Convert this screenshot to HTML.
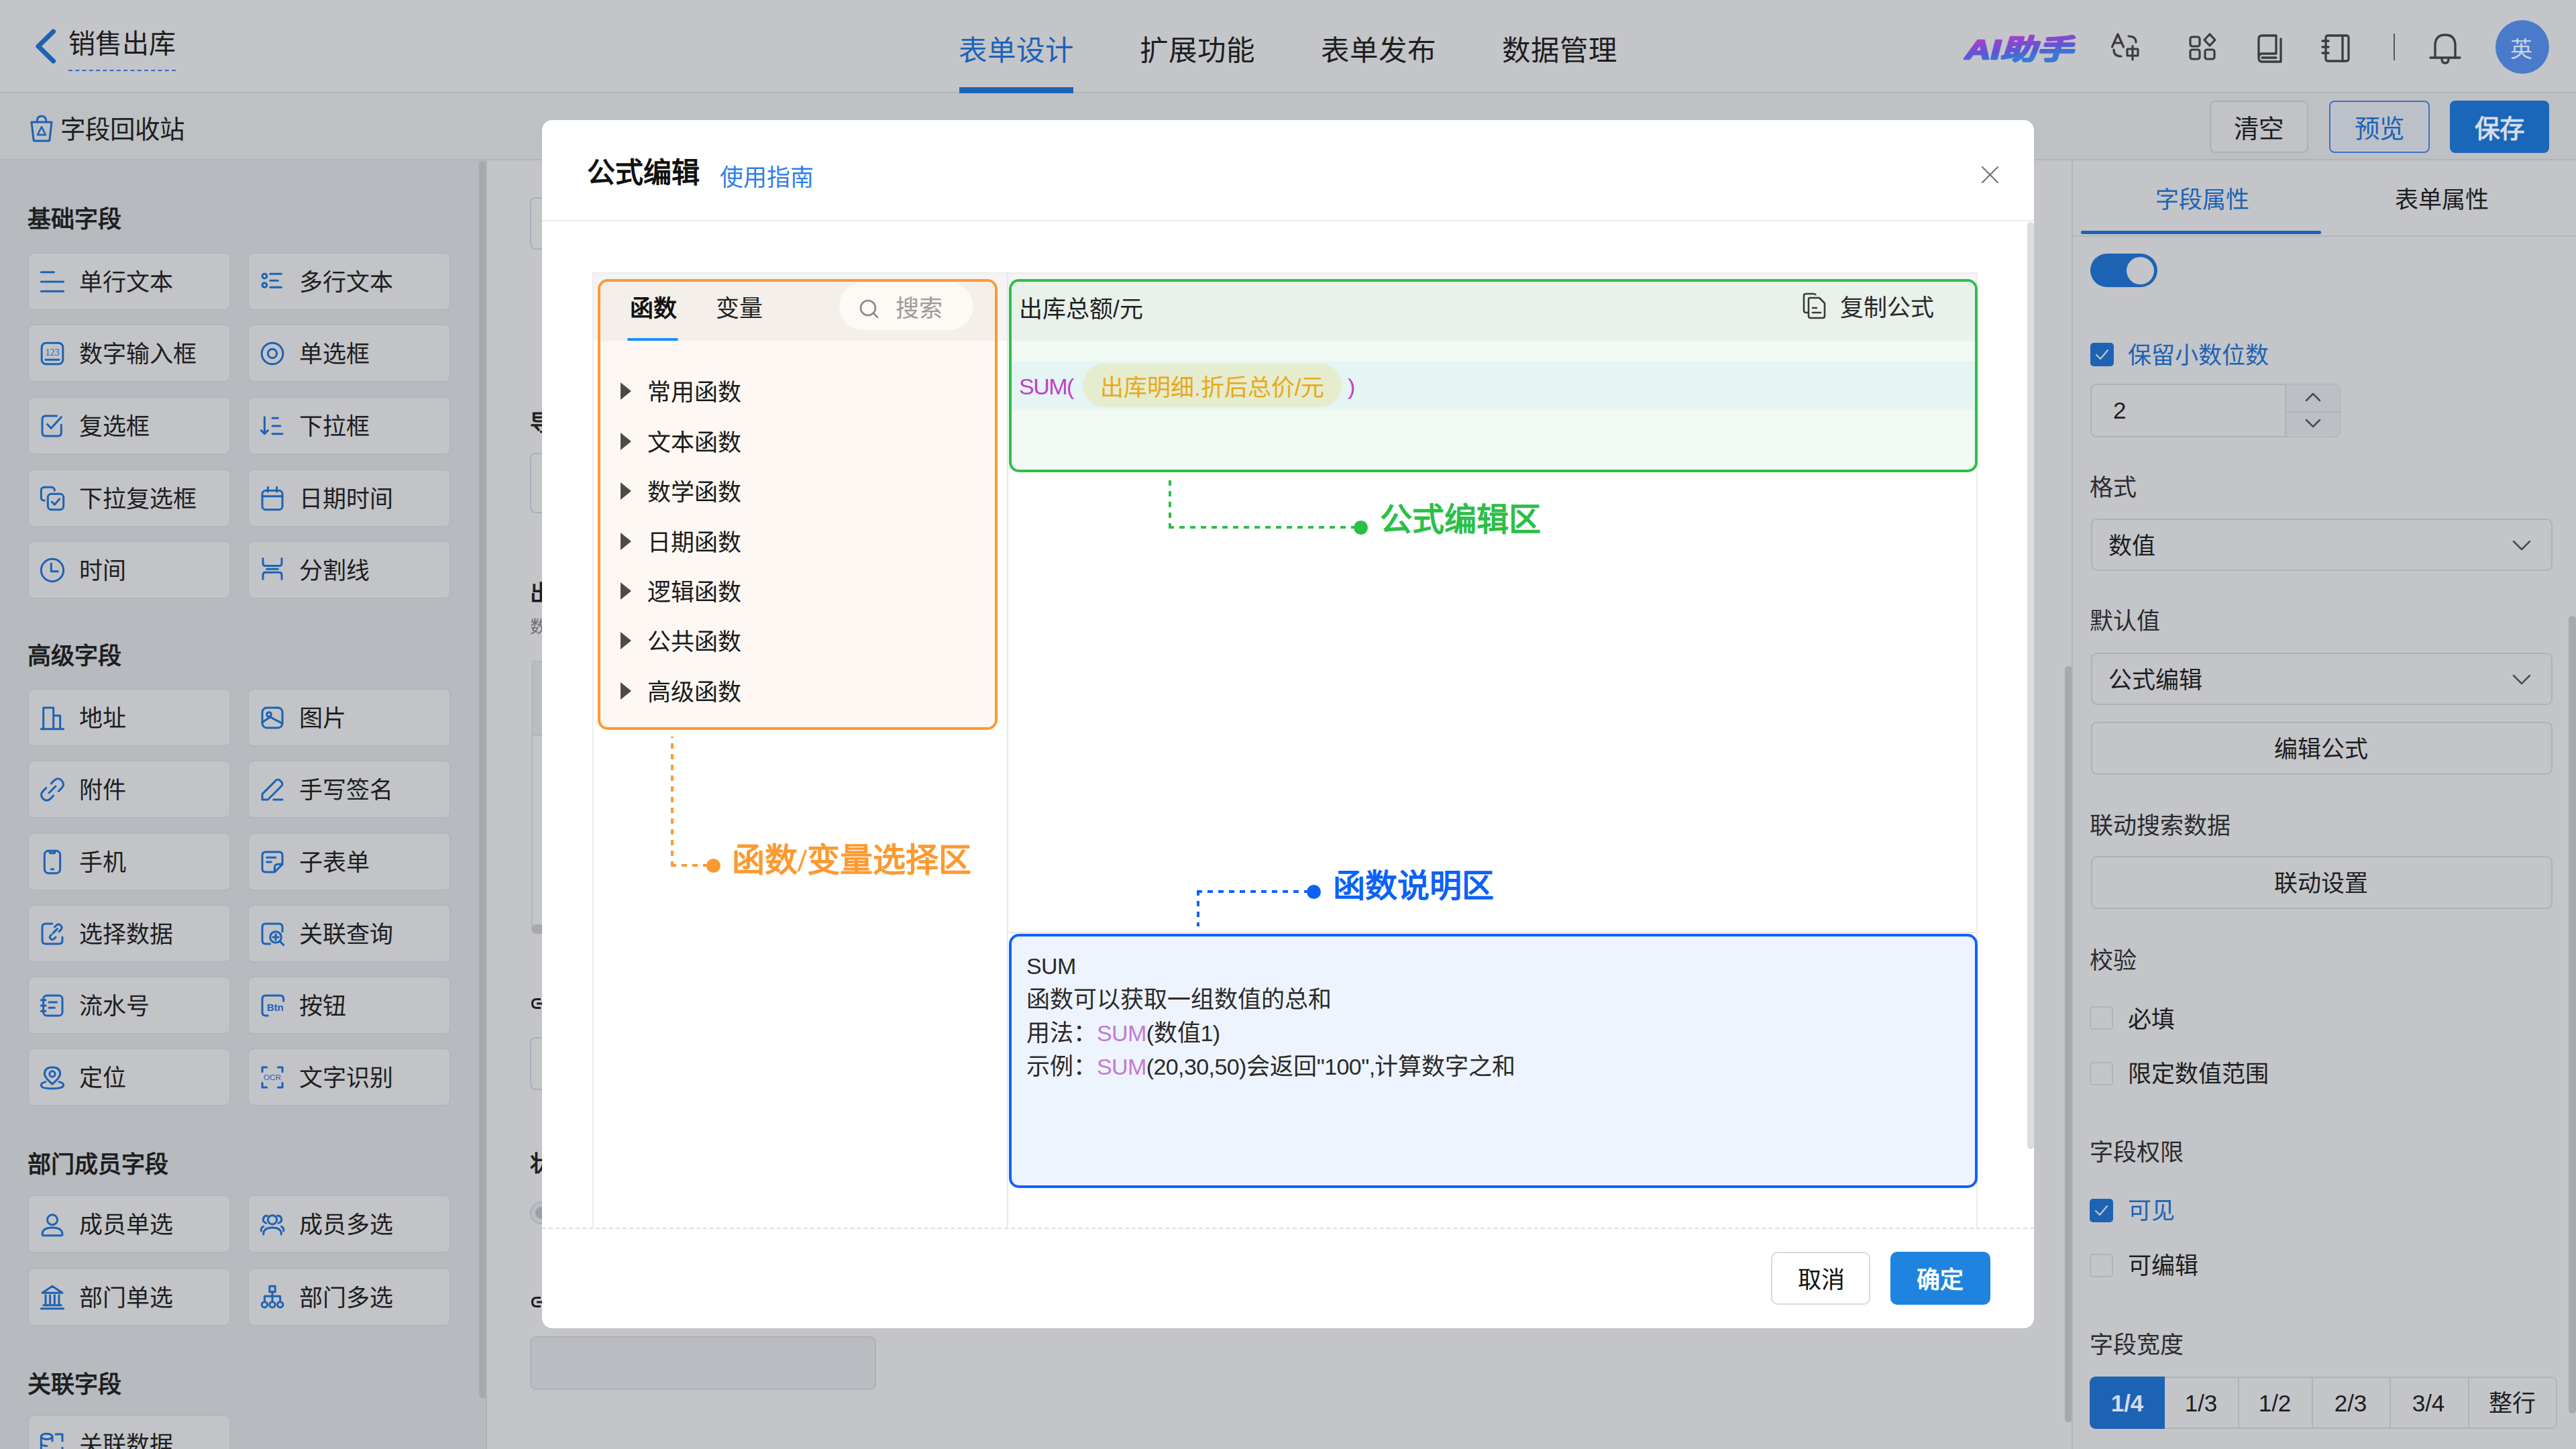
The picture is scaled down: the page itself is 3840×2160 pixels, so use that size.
<!DOCTYPE html>
<html lang="zh-CN">
<head>
<meta charset="utf-8">
<style>
*{box-sizing:border-box;margin:0;padding:0}
html,body{width:3840px;height:2160px;overflow:hidden;background:#c4c5c9;font-family:"Liberation Sans",sans-serif;color:#1d1e21}
.a{position:absolute}
.t{position:absolute;white-space:nowrap}
svg{position:absolute;overflow:visible}
.ic{fill:none;stroke:#1d63b4;stroke-width:1.8;stroke-linecap:round;stroke-linejoin:round}
.hi{fill:none;stroke:#3b3c40;stroke-width:2;stroke-linecap:round;stroke-linejoin:round}
.l{font-size:34px;letter-spacing:-0.6px}
.card{position:absolute;width:303px;height:87px;background:#c3c4c8;border:2px solid #b3b6bb;border-radius:9px}
</style>
</head>
<body>
<div class="a" style="left:0px;top:0px;width:3840px;height:139px;background:#c4c5c9;border-bottom:2px solid #b3b5ba"></div>
<svg style="left:48px;top:40px;" width="40" height="60" viewBox="0 0 40 60"><path d="M31.5 7 L9 29 L31.5 51" fill="none" stroke="#1d63b4" stroke-width="7.2" stroke-linecap="round" stroke-linejoin="round"/></svg>
<div class="t" style="left:102px;top:45px;font-size:40px;line-height:40px;color:#1d1e21;font-weight:500;">销售出库</div>
<div class="a" style="left:102px;top:103.5px;width:160px;height:0px;border-top:2.5px dashed #2f6dbd"></div>
<div class="t" style="left:1429px;top:55px;font-size:42.5px;line-height:42.5px;color:#1d63b4;font-weight:500;">表单设计</div>
<div class="t" style="left:1699px;top:55px;font-size:42.5px;line-height:42.5px;color:#1d1e21;font-weight:500;">扩展功能</div>
<div class="t" style="left:1969px;top:55px;font-size:42.5px;line-height:42.5px;color:#1d1e21;font-weight:500;">表单发布</div>
<div class="t" style="left:2239px;top:55px;font-size:42.5px;line-height:42.5px;color:#1d1e21;font-weight:500;">数据管理</div>
<div class="a" style="left:1430px;top:130px;width:170px;height:9px;background:#1d63b4"></div>
<svg style="left:2920px;top:40px;" width="180" height="60" viewBox="0 0 180 60"><defs><linearGradient id="aig" gradientUnits="userSpaceOnUse" x1="0" y1="10" x2="5" y2="56"><stop offset="0" stop-color="#e03cb8"/><stop offset="0.4" stop-color="#9146cd"/><stop offset="0.75" stop-color="#5a58d4"/><stop offset="1" stop-color="#3a78d8"/></linearGradient></defs><text x="9" y="48" font-size="41" font-weight="900" font-style="italic" textLength="160" lengthAdjust="spacingAndGlyphs" fill="url(#aig)" stroke="url(#aig)" stroke-width="2.4" stroke-linejoin="round">AI助手</text></svg>
<svg style="left:3146px;top:48px;" width="44" height="44" viewBox="0 0 44 44"><g class="hi" style="stroke-width:3.2"><path d="M2.5 22 L11 3 L19.5 22 M5.5 16 L16.5 16"/><path d="M27 6 Q38 6 38 15"/><path d="M5 26 Q5 36 16 36"/><rect x="25" y="25" width="16" height="10" rx="1"/><path d="M33 20.5 L33 41"/></g></svg>
<svg style="left:3262px;top:48px;" width="44" height="44" viewBox="0 0 44 44"><rect x="3" y="7" width="14" height="14" rx="3" class="hi" style="stroke-width:3.2"/><rect x="3" y="26" width="14" height="14" rx="3" class="hi" style="stroke-width:3.2"/><rect x="25" y="26" width="14" height="14" rx="3" class="hi" style="stroke-width:3.2"/><path d="M32 3 L40 11.5 L32 20 L24 11.5 Z" class="hi" style="stroke-width:3.2"/></svg>
<svg style="left:3362px;top:50px;" width="44" height="46" viewBox="0 0 44 46"><path d="M5 36 L5 8 Q5 3 10 3 L31 3 L31 30 L10 30 Q5 30 5 36 Q5 42 10 42 L38 42 L38 8" class="hi" style="stroke-width:3.3"/><path d="M10 36 L31 36" class="hi" style="stroke-width:3.3"/></svg>
<svg style="left:3460px;top:50px;" width="44" height="44" viewBox="0 0 44 44"><rect x="7" y="3" width="34" height="38" rx="3" class="hi" style="stroke-width:3.3"/><path d="M32 3 L32 41" class="hi" style="stroke-width:3.3"/><path d="M2 11 L11 11 M2 20 L11 20 M2 29 L11 29" class="hi" style="stroke-width:3.3"/></svg>
<div class="a" style="left:3568px;top:50px;width:2px;height:40px;background:#55565a"></div>
<svg style="left:3620px;top:48px;" width="50" height="50" viewBox="0 0 50 50"><path d="M10 38 L10 20 Q10 4 25 4 Q40 4 40 20 L40 38" class="hi" style="stroke-width:3.3"/><path d="M3 38 L47 38" class="hi" style="stroke-width:3.3"/><path d="M20 40 Q20 46 25 46 Q30 46 30 40" class="hi" style="stroke-width:3.3"/></svg>
<div class="a" style="left:3720px;top:30px;width:80px;height:80px;background:#4a7bcb;border-radius:50%"></div>
<div class="t" style="left:3742px;top:57px;font-size:33px;line-height:33px;color:#c9d3e6;font-weight:400;">英</div>
<div class="a" style="left:0px;top:139px;width:3840px;height:100px;background:#bec1c4;border-bottom:2px solid #b1b3b8"></div>
<svg style="left:42px;top:170px;" width="40" height="42" viewBox="0 0 40 42"><path d="M5 12 L35 12 L32 38 Q32 40 30 40 L10 40 Q8 40 8 38 Z" class="ic" style="stroke-width:3"/><path d="M13 12 Q13 3 20 3 Q27 3 27 12" class="ic" style="stroke-width:3"/><path d="M20 19 L14 31 L26 31 Z" class="ic" style="stroke-width:2.5"/></svg>
<div class="t" style="left:90px;top:175px;font-size:37.5px;line-height:37.5px;color:#1d1e21;font-weight:500;">字段回收站</div>
<div class="a" style="left:3294px;top:150px;width:147px;height:78px;border:2px solid #adb0b6;border-radius:8px;background:#c1c3c7"></div>
<div class="t" style="left:3330px;top:174px;font-size:37.5px;line-height:37.5px;color:#1d1e21;font-weight:500;">清空</div>
<div class="a" style="left:3472px;top:150px;width:150px;height:78px;border:2px solid #3b74bf;border-radius:8px;background:#bcc1c9"></div>
<div class="t" style="left:3510px;top:174px;font-size:37.5px;line-height:37.5px;color:#1d63b4;font-weight:500;">预览</div>
<div class="a" style="left:3652px;top:150px;width:148px;height:78px;border-radius:8px;background:#1a66b8"></div>
<div class="t" style="left:3689px;top:174px;font-size:37.5px;line-height:37.5px;color:#d5dcea;font-weight:700;">保存</div>
<div class="a" style="left:0px;top:239px;width:725px;height:1921px;background:#b7babf"></div>
<div class="a" style="left:714px;top:240px;width:11px;height:1844px;background:#a8a9ae;border-radius:6px"></div>
<div class="t" style="left:41px;top:309px;font-size:35px;line-height:35px;color:#1d1e21;font-weight:700;">基础字段</div>
<div class="card" style="left:41px;top:376px"></div>
<svg style="left:58px;top:399.5px;" width="40" height="40" viewBox="0 0 24 24"><g class="ic"><path d="M2 3.5 L13.5 3.5 M2 12 L22 12 M2 20.5 L22 20.5"/></g></svg>
<div class="t" style="left:118px;top:402.5px;font-size:35px;line-height:35px;color:#1d1e21;font-weight:500;">单行文本</div>
<div class="card" style="left:369px;top:376px"></div>
<svg style="left:386px;top:399.5px;" width="40" height="40" viewBox="0 0 24 24"><g class="ic"><circle cx="5" cy="7" r="2"/><circle cx="5" cy="15" r="2"/><path d="M10 5 L20 5 M10 11 L17 11 M10 17 L20 17"/></g></svg>
<div class="t" style="left:446px;top:402.5px;font-size:35px;line-height:35px;color:#1d1e21;font-weight:500;">多行文本</div>
<div class="card" style="left:41px;top:483px"></div>
<svg style="left:58px;top:506.5px;" width="40" height="40" viewBox="0 0 24 24"><g class="ic"><rect x="2.5" y="2.5" width="19" height="19" rx="4"/><path d="M6 17.5 L18 17.5"/><text x="12" y="13.5" text-anchor="middle" font-size="8.5" font-family="Liberation Serif" fill="#1d63b4" stroke="none">123</text></g></svg>
<div class="t" style="left:118px;top:509.5px;font-size:35px;line-height:35px;color:#1d1e21;font-weight:500;">数字输入框</div>
<div class="card" style="left:369px;top:483px"></div>
<svg style="left:386px;top:506.5px;" width="40" height="40" viewBox="0 0 24 24"><g class="ic"><circle cx="12" cy="12" r="9.5"/><circle cx="12" cy="12" r="4"/></g></svg>
<div class="t" style="left:446px;top:509.5px;font-size:35px;line-height:35px;color:#1d1e21;font-weight:500;">单选框</div>
<div class="card" style="left:41px;top:591px"></div>
<svg style="left:58px;top:614.5px;" width="40" height="40" viewBox="0 0 24 24"><g class="ic"><path d="M20 11 L20 18 Q20 21 17 21 L6 21 Q3 21 3 18 L3 6 Q3 3 6 3 L16 3"/><path d="M7.5 10.5 L11 14 L20 4"/></g></svg>
<div class="t" style="left:118px;top:617.5px;font-size:35px;line-height:35px;color:#1d1e21;font-weight:500;">复选框</div>
<div class="card" style="left:369px;top:591px"></div>
<svg style="left:386px;top:614.5px;" width="40" height="40" viewBox="0 0 24 24"><g class="ic"><path d="M5 4 L5 19 M2 16 L5 19 L8 16"/><path d="M12 5 L17 5 M12 12 L19 12 M12 19 L21 19"/></g></svg>
<div class="t" style="left:446px;top:617.5px;font-size:35px;line-height:35px;color:#1d1e21;font-weight:500;">下拉框</div>
<div class="card" style="left:41px;top:699px"></div>
<svg style="left:58px;top:722.5px;" width="40" height="40" viewBox="0 0 24 24"><g class="ic"><path d="M14 5 Q14 2 11 2 L5 2 Q2 2 2 5 L2 11 Q2 14 5 14"/><rect x="8" y="8" width="14" height="14" rx="3"/><path d="M11.5 15 L14 17.5 L18.5 12.5"/></g></svg>
<div class="t" style="left:118px;top:725.5px;font-size:35px;line-height:35px;color:#1d1e21;font-weight:500;">下拉复选框</div>
<div class="card" style="left:369px;top:699px"></div>
<svg style="left:386px;top:722.5px;" width="40" height="40" viewBox="0 0 24 24"><g class="ic"><rect x="3" y="5" width="18" height="17" rx="3"/><path d="M3 10 L21 10 M8 2 L8 6 M16 2 L16 6"/></g></svg>
<div class="t" style="left:446px;top:725.5px;font-size:35px;line-height:35px;color:#1d1e21;font-weight:500;">日期时间</div>
<div class="card" style="left:41px;top:806px"></div>
<svg style="left:58px;top:829.5px;" width="40" height="40" viewBox="0 0 24 24"><g class="ic"><circle cx="12" cy="12" r="10"/><path d="M11 6 L11 13 L17 13"/></g></svg>
<div class="t" style="left:118px;top:832.5px;font-size:35px;line-height:35px;color:#1d1e21;font-weight:500;">时间</div>
<div class="card" style="left:369px;top:806px"></div>
<svg style="left:386px;top:829.5px;" width="40" height="40" viewBox="0 0 24 24"><g class="ic"><path d="M3.6 1.5 V5.8 Q3.6 8.1 5.8 8.1 H18.2 Q20.4 8.1 20.4 5.8 V1.5 M3.6 20 V16.2 Q3.6 13.9 5.8 13.9 H18.2 Q20.4 13.9 20.4 16.2 V20 M7 11 H17"/></g></svg>
<div class="t" style="left:446px;top:832.5px;font-size:35px;line-height:35px;color:#1d1e21;font-weight:500;">分割线</div>
<div class="t" style="left:41px;top:960px;font-size:35px;line-height:35px;color:#1d1e21;font-weight:700;">高级字段</div>
<div class="card" style="left:41px;top:1026px"></div>
<svg style="left:58px;top:1049.5px;" width="40" height="40" viewBox="0 0 24 24"><g class="ic"><path d="M2 22 L22 22 M4 22 L4 3 L13 3 L13 22 M13 10 L19 10 L19 22"/></g></svg>
<div class="t" style="left:118px;top:1052.5px;font-size:35px;line-height:35px;color:#1d1e21;font-weight:500;">地址</div>
<div class="card" style="left:369px;top:1026px"></div>
<svg style="left:386px;top:1049.5px;" width="40" height="40" viewBox="0 0 24 24"><g class="ic"><rect x="3" y="3" width="18" height="18" rx="4"/><circle cx="9" cy="9" r="2"/><path d="M3 16 L9 12 Q11 11 13 13 L21 17"/></g></svg>
<div class="t" style="left:446px;top:1052.5px;font-size:35px;line-height:35px;color:#1d1e21;font-weight:500;">图片</div>
<div class="card" style="left:41px;top:1133px"></div>
<svg style="left:58px;top:1156.5px;" width="40" height="40" viewBox="0 0 24 24"><g class="ic"><path d="M9 15 L15 9"/><path d="M11 6.5 L13.5 4 Q17 0.5 20.5 4 Q23.5 7.5 20 11 L17.5 13.5 M13 17.5 L10.5 20 Q7 23.5 3.5 20 Q0.5 16.5 4 13 L6.5 10.5"/></g></svg>
<div class="t" style="left:118px;top:1159.5px;font-size:35px;line-height:35px;color:#1d1e21;font-weight:500;">附件</div>
<div class="card" style="left:369px;top:1133px"></div>
<svg style="left:386px;top:1156.5px;" width="40" height="40" viewBox="0 0 24 24"><g class="ic"><path d="M3 21 L3 16 L15 4 Q17 2 19 4 L20 5 Q22 7 20 9 L8 21 Z"/><path d="M13 21 L21 21"/></g></svg>
<div class="t" style="left:446px;top:1159.5px;font-size:35px;line-height:35px;color:#1d1e21;font-weight:500;">手写签名</div>
<div class="card" style="left:41px;top:1241px"></div>
<svg style="left:58px;top:1264.5px;" width="40" height="40" viewBox="0 0 24 24"><g class="ic"><rect x="5" y="2" width="14" height="20" rx="3.5"/><path d="M9.5 2.5 L10 4 L14 4 L14.5 2.5 M11 18.5 L13 18.5"/></g></svg>
<div class="t" style="left:118px;top:1267.5px;font-size:35px;line-height:35px;color:#1d1e21;font-weight:500;">手机</div>
<div class="card" style="left:369px;top:1241px"></div>
<svg style="left:386px;top:1264.5px;" width="40" height="40" viewBox="0 0 24 24"><g class="ic"><path d="M21 14 L21 6 Q21 3 18 3 L6 3 Q3 3 3 6 L3 18 Q3 21 6 21 L14 21 Z M14 21 L14 17 Q14 14 17 14 L21 14"/><path d="M7 8 L15 8 M7 12 L11 12"/></g></svg>
<div class="t" style="left:446px;top:1267.5px;font-size:35px;line-height:35px;color:#1d1e21;font-weight:500;">子表单</div>
<div class="card" style="left:41px;top:1348px"></div>
<svg style="left:58px;top:1371.5px;" width="40" height="40" viewBox="0 0 24 24"><g class="ic"><path d="M12 3 L6 3 Q3 3 3 6 L3 18 Q3 21 6 21 L18 21 Q21 21 21 18 L21 15"/><path d="M12.5 11.5 L16.5 7.5"/><path d="M14 6 L15.5 4.5 Q17.5 2.5 19.5 4.5 Q21.5 6.5 19.5 8.5 L18 10 M11 13 L10.5 13.5 Q9 15 10.5 16.5 Q12 18 13.5 16.5 L15 15"/></g></svg>
<div class="t" style="left:118px;top:1374.5px;font-size:35px;line-height:35px;color:#1d1e21;font-weight:500;">选择数据</div>
<div class="card" style="left:369px;top:1348px"></div>
<svg style="left:386px;top:1371.5px;" width="40" height="40" viewBox="0 0 24 24"><g class="ic"><path d="M10 21 L6 21 Q3 21 3 18 L3 6 Q3 3 6 3 L18 3 Q21 3 21 6 L21 10"/><circle cx="15" cy="15" r="5"/><path d="M15 12.5 L15 17.5 M12.5 15 L17.5 15 M19 19 L22 22"/></g></svg>
<div class="t" style="left:446px;top:1374.5px;font-size:35px;line-height:35px;color:#1d1e21;font-weight:500;">关联查询</div>
<div class="card" style="left:41px;top:1455px"></div>
<svg style="left:58px;top:1478.5px;" width="40" height="40" viewBox="0 0 24 24"><g class="ic"><rect x="4" y="3" width="17" height="18" rx="3"/><path d="M2 7 L6 7 M2 12 L6 12 M2 17 L6 17 M9 9 L16 9 M9 14 L14 14"/></g></svg>
<div class="t" style="left:118px;top:1481.5px;font-size:35px;line-height:35px;color:#1d1e21;font-weight:500;">流水号</div>
<div class="card" style="left:369px;top:1455px"></div>
<svg style="left:386px;top:1478.5px;" width="40" height="40" viewBox="0 0 24 24"><g class="ic"><path d="M22 8 L22 6 Q22 3 19 3 L6 3 Q3 3 3 6 L3 18 Q3 21 6 21 L8 21"/><text x="14.5" y="17" text-anchor="middle" font-size="9" font-weight="bold" font-family="Liberation Sans" fill="#1d63b4" stroke="none">Btn</text></g></svg>
<div class="t" style="left:446px;top:1481.5px;font-size:35px;line-height:35px;color:#1d1e21;font-weight:500;">按钮</div>
<div class="card" style="left:41px;top:1562px"></div>
<svg style="left:58px;top:1585.5px;" width="40" height="40" viewBox="0 0 24 24"><g class="ic"><path d="M12 18 Q5 12 5 9 Q5 3 12 3 Q19 3 19 9 Q19 12 12 18 Z"/><circle cx="12" cy="9" r="2.5"/><path d="M6 16 Q2 17 2 19 Q2 22 12 22 Q22 22 22 19 Q22 17 18 16"/></g></svg>
<div class="t" style="left:118px;top:1588.5px;font-size:35px;line-height:35px;color:#1d1e21;font-weight:500;">定位</div>
<div class="card" style="left:369px;top:1562px"></div>
<svg style="left:386px;top:1585.5px;" width="40" height="40" viewBox="0 0 24 24"><g class="ic"><path d="M3 7 L3 3 L7 3 M17 3 L21 3 L21 7 M21 17 L21 21 L17 21 M7 21 L3 21 L3 17"/><text x="12" y="14.5" text-anchor="middle" font-size="7" font-family="Liberation Sans" fill="#1d63b4" stroke="none">OCR</text></g></svg>
<div class="t" style="left:446px;top:1588.5px;font-size:35px;line-height:35px;color:#1d1e21;font-weight:500;">文字识别</div>
<div class="t" style="left:41px;top:1718px;font-size:35px;line-height:35px;color:#1d1e21;font-weight:700;">部门成员字段</div>
<div class="card" style="left:41px;top:1781px"></div>
<svg style="left:58px;top:1804.5px;" width="40" height="40" viewBox="0 0 24 24"><g class="ic"><circle cx="12" cy="8" r="4.5"/><path d="M3 21 Q3 15 12 15 Q21 15 21 21 Q21 22 20 22 L4 22 Q3 22 3 21 Z"/></g></svg>
<div class="t" style="left:118px;top:1807.5px;font-size:35px;line-height:35px;color:#1d1e21;font-weight:500;">成员单选</div>
<div class="card" style="left:369px;top:1781px"></div>
<svg style="left:386px;top:1804.5px;" width="40" height="40" viewBox="0 0 24 24"><g class="ic"><circle cx="12" cy="8" r="4"/><path d="M4 21 Q4 15 12 15 Q20 15 20 21"/><path d="M6.5 11 Q3 10 4 6.5 Q5 4 7.5 4.5 M17.5 11 Q21 10 20 6.5 Q19 4 16.5 4.5 M2 18 Q1.5 15 4 14 M22 18 Q22.5 15 20 14"/></g></svg>
<div class="t" style="left:446px;top:1807.5px;font-size:35px;line-height:35px;color:#1d1e21;font-weight:500;">成员多选</div>
<div class="card" style="left:41px;top:1890px"></div>
<svg style="left:58px;top:1913.5px;" width="40" height="40" viewBox="0 0 24 24"><g class="ic"><path d="M3 8 L12 2 L21 8 Z M2 22 L22 22 M4 19 L20 19 M6 10 L6 19 M10 10 L10 19 M14 10 L14 19 M18 10 L18 19"/></g></svg>
<div class="t" style="left:118px;top:1916.5px;font-size:35px;line-height:35px;color:#1d1e21;font-weight:500;">部门单选</div>
<div class="card" style="left:369px;top:1890px"></div>
<svg style="left:386px;top:1913.5px;" width="40" height="40" viewBox="0 0 24 24"><g class="ic"><rect x="9.5" y="2" width="5" height="5"/><path d="M12 7 L12 11 M5 15 L5 11 L19 11 L19 15 M12 11 L12 15"/><circle cx="5" cy="18.5" r="2.5"/><circle cx="12" cy="18.5" r="2.5"/><circle cx="19" cy="18.5" r="2.5"/></g></svg>
<div class="t" style="left:446px;top:1916.5px;font-size:35px;line-height:35px;color:#1d1e21;font-weight:500;">部门多选</div>
<div class="t" style="left:41px;top:2046px;font-size:35px;line-height:35px;color:#1d1e21;font-weight:700;">关联字段</div>
<div class="card" style="left:41px;top:2109px"></div>
<svg style="left:58px;top:2132.5px;" width="40" height="40" viewBox="0 0 24 24"><g class="ic"><ellipse cx="7" cy="5" rx="5" ry="2.5"/><path d="M2 5 L2 18 Q2 20.5 7 20.5 M2 11 Q2 13.5 7 13.5 M12 5 L12 9"/><path d="M15 3 L21 3 L21 9 M15 21 L21 21 L21 15"/></g></svg>
<div class="t" style="left:118px;top:2135.5px;font-size:35px;line-height:35px;color:#1d1e21;font-weight:500;">关联数据</div>
<div class="a" style="left:714px;top:240px;width:11px;height:1844px;background:#a8a9ae;border-radius:6px"></div>
<div class="a" style="left:724px;top:239px;width:2px;height:1921px;background:#b0b2b7"></div>
<div class="a" style="left:790px;top:294px;width:60px;height:78px;border:2px solid #aab0bb;border-radius:8px"></div>
<div class="t" style="left:790px;top:614px;font-size:33px;line-height:33px;color:#1d1e21;font-weight:700;">导</div>
<div class="a" style="left:790px;top:675px;width:60px;height:90px;border:2px solid #aab0bb;border-radius:8px"></div>
<div class="t" style="left:790px;top:868px;font-size:33px;line-height:33px;color:#1d1e21;font-weight:700;">出</div>
<div class="t" style="left:790px;top:922px;font-size:25px;line-height:25px;color:#6b6d72;font-weight:400;">数</div>
<div class="a" style="left:792px;top:985px;width:40px;height:400px;border:2px solid #b3b6bb;border-radius:4px"></div>
<div class="a" style="left:794px;top:987px;width:38px;height:110px;background:#babcc1;border-bottom:2px solid #b0b3b8"></div>
<div class="a" style="left:792px;top:1378px;width:40px;height:14px;background:#a8a9ae;border-radius:7px"></div>
<svg style="left:790px;top:1486px;" width="20" height="20" viewBox="0 0 20 20"><path d="M16 3.5 L10 3.5 Q3.5 3.5 3.5 10 Q3.5 16.5 10 16.5 L16 16.5 M10 10 L18 10" fill="none" stroke="#1d1e21" stroke-width="3"/></svg>
<div class="a" style="left:790px;top:1546px;width:60px;height:79px;border:2px solid #aab0bb;border-radius:8px"></div>
<div class="t" style="left:790px;top:1718px;font-size:33px;line-height:33px;color:#1d1e21;font-weight:700;">状</div>
<div class="a" style="left:790px;top:1791px;width:34px;height:34px;border:2px solid #aab0bb;border-radius:50%;background:#bcbec3"></div>
<div class="a" style="left:798px;top:1799px;width:18px;height:18px;background:#9aa0aa;border-radius:50%"></div>
<svg style="left:790px;top:1931px;" width="20" height="20" viewBox="0 0 20 20"><path d="M16 3.5 L10 3.5 Q3.5 3.5 3.5 10 Q3.5 16.5 10 16.5 L16 16.5 M10 10 L18 10" fill="none" stroke="#1d1e21" stroke-width="3"/></svg>
<div class="a" style="left:790px;top:1992px;width:516px;height:80px;border:2px solid #aeb1b7;border-radius:9px;background:#babcc1"></div>
<div class="a" style="left:3078px;top:993px;width:11px;height:1127px;background:#a8a9ae;border-radius:6px"></div>
<div class="a" style="left:3088px;top:239px;width:752px;height:1921px;background:#c4c5c9;border-left:2px solid #b1b3b8"></div>
<div class="t" style="left:3213px;top:280px;font-size:35px;line-height:35px;color:#1d63b4;font-weight:500;">字段属性</div>
<div class="t" style="left:3570px;top:280px;font-size:35px;line-height:35px;color:#1d1e21;font-weight:500;">表单属性</div>
<div class="a" style="left:3090px;top:351px;width:750px;height:2px;background:#b3b5ba"></div>
<div class="a" style="left:3102px;top:344px;width:358px;height:5px;background:#1d63b4;border-radius:2px"></div>
<div class="a" style="left:3116px;top:378px;width:100px;height:50px;background:#1d63b4;border-radius:25px"></div>
<div class="a" style="left:3170px;top:383px;width:41px;height:41px;background:#c4c5c9;border-radius:50%"></div>
<div class="a" style="left:3116px;top:511px;width:35px;height:35px;background:#1d63b4;border-radius:5px"></div>
<svg style="left:3116px;top:511px;" width="35" height="35" viewBox="0 0 35 35"><path d="M9 18 L15 24 L26 11" fill="none" stroke="#c4c5c9" stroke-width="2.2" stroke-linecap="round" stroke-linejoin="round"/></svg>
<div class="t" style="left:3172px;top:512px;font-size:35px;line-height:35px;color:#1d63b4;font-weight:500;">保留小数位数</div>
<div class="a" style="left:3116px;top:572px;width:373px;height:80px;border:2px solid #aeb1b7;border-radius:9px"></div>
<div class="a" style="left:3406px;top:573px;width:82px;height:78px;background:#bdbfc4;border-left:2px solid #b0b3b9;border-radius:0 8px 8px 0"></div>
<div class="a" style="left:3407px;top:613px;width:81px;height:2px;background:#b0b3b9"></div>
<svg style="left:3436px;top:584px;" width="24" height="16" viewBox="0 0 24 16"><path d="M2 13 L12 3 L22 13" fill="none" stroke="#4a4b50" stroke-width="2.5" stroke-linecap="round" stroke-linejoin="round"/></svg>
<svg style="left:3436px;top:623px;" width="24" height="16" viewBox="0 0 24 16"><path d="M2 3 L12 13 L22 3" fill="none" stroke="#4a4b50" stroke-width="2.5" stroke-linecap="round" stroke-linejoin="round"/></svg>
<div class="t" style="left:3150px;top:594px;font-size:35px;line-height:35px;color:#1d1e21;font-weight:400;">2</div>
<div class="t" style="left:3115px;top:709px;font-size:35px;line-height:35px;color:#2b2c30;font-weight:500;">格式</div>
<div class="a" style="left:3117px;top:773px;width:688px;height:78px;border:2px solid #aeb1b7;border-radius:9px"></div>
<div class="t" style="left:3143px;top:796px;font-size:35px;line-height:35px;color:#1d1e21;font-weight:500;">数值</div>
<svg style="left:3745px;top:804px;" width="30" height="18" viewBox="0 0 30 18"><path d="M2 3 L14 15 L26 3" fill="none" stroke="#4a4b50" stroke-width="2.5" stroke-linecap="round" stroke-linejoin="round"/></svg>
<div class="t" style="left:3115px;top:908px;font-size:35px;line-height:35px;color:#2b2c30;font-weight:500;">默认值</div>
<div class="a" style="left:3117px;top:973px;width:688px;height:78px;border:2px solid #aeb1b7;border-radius:9px"></div>
<div class="t" style="left:3143px;top:996px;font-size:35px;line-height:35px;color:#1d1e21;font-weight:500;">公式编辑</div>
<svg style="left:3745px;top:1004px;" width="30" height="18" viewBox="0 0 30 18"><path d="M2 3 L14 15 L26 3" fill="none" stroke="#4a4b50" stroke-width="2.5" stroke-linecap="round" stroke-linejoin="round"/></svg>
<div class="a" style="left:3117px;top:1076px;width:688px;height:79px;border:2px solid #aeb1b7;border-radius:9px"></div>
<div class="t" style="left:3390px;top:1099px;font-size:35px;line-height:35px;color:#1d1e21;font-weight:500;">编辑公式</div>
<div class="t" style="left:3115px;top:1213px;font-size:35px;line-height:35px;color:#2b2c30;font-weight:500;">联动搜索数据</div>
<div class="a" style="left:3117px;top:1276px;width:688px;height:79px;border:2px solid #aeb1b7;border-radius:9px"></div>
<div class="t" style="left:3390px;top:1299px;font-size:35px;line-height:35px;color:#1d1e21;font-weight:500;">联动设置</div>
<div class="t" style="left:3115px;top:1414px;font-size:35px;line-height:35px;color:#2b2c30;font-weight:500;">校验</div>
<div class="a" style="left:3115px;top:1500px;width:35px;height:35px;border:2px solid #b0b3b9;border-radius:5px;background:#c4c5c9"></div>
<div class="t" style="left:3172px;top:1502px;font-size:35px;line-height:35px;color:#1d1e21;font-weight:500;">必填</div>
<div class="a" style="left:3115px;top:1583px;width:35px;height:35px;border:2px solid #b0b3b9;border-radius:5px;background:#c4c5c9"></div>
<div class="t" style="left:3172px;top:1583px;font-size:35px;line-height:35px;color:#1d1e21;font-weight:500;">限定数值范围</div>
<div class="t" style="left:3115px;top:1700px;font-size:35px;line-height:35px;color:#2b2c30;font-weight:500;">字段权限</div>
<div class="a" style="left:3115px;top:1787px;width:35px;height:35px;background:#1d63b4;border-radius:5px"></div>
<svg style="left:3115px;top:1787px;" width="35" height="35" viewBox="0 0 35 35"><path d="M9 18 L15 24 L26 11" fill="none" stroke="#c4c5c9" stroke-width="2.2" stroke-linecap="round" stroke-linejoin="round"/></svg>
<div class="t" style="left:3172px;top:1787px;font-size:35px;line-height:35px;color:#1d63b4;font-weight:500;">可见</div>
<div class="a" style="left:3115px;top:1869px;width:35px;height:35px;border:2px solid #b0b3b9;border-radius:5px;background:#c4c5c9"></div>
<div class="t" style="left:3172px;top:1869px;font-size:35px;line-height:35px;color:#1d1e21;font-weight:500;">可编辑</div>
<div class="t" style="left:3115px;top:1987px;font-size:35px;line-height:35px;color:#2b2c30;font-weight:500;">字段宽度</div>
<div class="a" style="left:3115px;top:2052px;width:697px;height:78px;border:2px solid #b0b3b9;border-radius:9px"></div>
<div class="a" style="left:3115px;top:2052px;width:112px;height:78px;background:#1d63b4;border-radius:9px 0 0 9px"></div>
<div class="a" style="left:3336px;top:2054px;width:2px;height:74px;background:#b0b3b9"></div>
<div class="a" style="left:3446px;top:2054px;width:2px;height:74px;background:#b0b3b9"></div>
<div class="a" style="left:3562px;top:2054px;width:2px;height:74px;background:#b0b3b9"></div>
<div class="a" style="left:3679px;top:2054px;width:2px;height:74px;background:#b0b3b9"></div>
<div class="t" style="left:3111px;width:120px;text-align:center;top:2072px;font-size:35px;line-height:40px;color:#d5dcea;font-weight:700">1/4</div>
<div class="t" style="left:3221px;width:120px;text-align:center;top:2072px;font-size:35px;line-height:40px;color:#1d1e21;font-weight:400">1/3</div>
<div class="t" style="left:3331px;width:120px;text-align:center;top:2072px;font-size:35px;line-height:40px;color:#1d1e21;font-weight:400">1/2</div>
<div class="t" style="left:3444px;width:120px;text-align:center;top:2072px;font-size:35px;line-height:40px;color:#1d1e21;font-weight:400">2/3</div>
<div class="t" style="left:3560px;width:120px;text-align:center;top:2072px;font-size:35px;line-height:40px;color:#1d1e21;font-weight:400">3/4</div>
<div class="t" style="left:3685px;width:120px;text-align:center;top:2072px;font-size:35px;line-height:40px;color:#1d1e21;font-weight:400">整行</div>
<div class="a" style="left:3829px;top:918px;width:11px;height:1189px;background:#a8a9ae;border-radius:6px"></div>
<div class="a" style="left:808px;top:179px;width:2224px;height:1801px;background:#fff;border-radius:15px"></div>
<div class="t" style="left:875px;top:237px;font-size:42px;line-height:42px;color:#111;font-weight:700;">公式编辑</div>
<div class="t" style="left:1073px;top:247px;font-size:35px;line-height:35px;color:#2f7fe8;font-weight:500;">使用指南</div>
<svg style="left:2953px;top:247px;" width="27" height="27" viewBox="0 0 27 27"><path d="M2 2 L25 25 M25 2 L2 25" fill="none" stroke="#707277" stroke-width="2.1" stroke-linecap="round"/></svg>
<div class="a" style="left:808px;top:328px;width:2224px;height:2px;background:#ebebeb"></div>
<div class="a" style="left:3022px;top:331px;width:10px;height:1382px;background:#dcdde0;border-radius:5px"></div>
<div class="a" style="left:883px;top:406px;width:2065px;height:1424px;border:2px solid #ececec;border-bottom:none;background:#fff"></div>
<div class="a" style="left:885px;top:408px;width:616px;height:100px;background:#f4f4f6"></div>
<div class="a" style="left:1503px;top:408px;width:1443px;height:100px;background:#f4f4f6"></div>
<div class="a" style="left:1501px;top:406px;width:2px;height:1424px;background:#e8e8e8"></div>
<div class="a" style="left:1503px;top:1389px;width:1442px;height:2px;background:#e8e8e8"></div>
<div class="a" style="left:891px;top:416px;width:596px;height:672px;border:4px solid #fb9a30;border-radius:15px;background:#fdf8f3;overflow:hidden"></div>
<div class="a" style="left:895px;top:420px;width:588px;height:88px;background:#f4efe9;border-radius:11px 11px 0 0"></div>
<div class="t" style="left:939px;top:442px;font-size:35px;line-height:35px;color:#111;font-weight:700;">函数</div>
<div class="t" style="left:1067px;top:442px;font-size:35px;line-height:35px;color:#222;font-weight:500;">变量</div>
<div class="a" style="left:935px;top:504px;width:76px;height:4px;background:#1890ff;border-radius:2px"></div>
<div class="a" style="left:1251px;top:421px;width:200px;height:71px;background:#fdf9f4;border-radius:36px"></div>
<svg style="left:1280px;top:445px;" width="34" height="34" viewBox="0 0 34 34"><circle cx="14" cy="14" r="11" fill="none" stroke="#8a8a8a" stroke-width="2.6"/><path d="M22 22 L28 28" stroke="#8a8a8a" stroke-width="2.6" stroke-linecap="round"/></svg>
<div class="t" style="left:1335px;top:442px;font-size:35px;line-height:35px;color:#9b9b9b;font-weight:400;">搜索</div>
<svg style="left:925px;top:570px;" width="17" height="26" viewBox="0 0 17 26"><path d="M0 0 L16 13 L0 26 Z" fill="#4d4a47"/></svg>
<div class="t" style="left:965px;top:567px;font-size:35px;line-height:35px;color:#1a1a1a;font-weight:500;">常用函数</div>
<svg style="left:925px;top:645px;" width="17" height="26" viewBox="0 0 17 26"><path d="M0 0 L16 13 L0 26 Z" fill="#4d4a47"/></svg>
<div class="t" style="left:965px;top:642px;font-size:35px;line-height:35px;color:#1a1a1a;font-weight:500;">文本函数</div>
<svg style="left:925px;top:719px;" width="17" height="26" viewBox="0 0 17 26"><path d="M0 0 L16 13 L0 26 Z" fill="#4d4a47"/></svg>
<div class="t" style="left:965px;top:716px;font-size:35px;line-height:35px;color:#1a1a1a;font-weight:500;">数学函数</div>
<svg style="left:925px;top:794px;" width="17" height="26" viewBox="0 0 17 26"><path d="M0 0 L16 13 L0 26 Z" fill="#4d4a47"/></svg>
<div class="t" style="left:965px;top:791px;font-size:35px;line-height:35px;color:#1a1a1a;font-weight:500;">日期函数</div>
<svg style="left:925px;top:868px;" width="17" height="26" viewBox="0 0 17 26"><path d="M0 0 L16 13 L0 26 Z" fill="#4d4a47"/></svg>
<div class="t" style="left:965px;top:865px;font-size:35px;line-height:35px;color:#1a1a1a;font-weight:500;">逻辑函数</div>
<svg style="left:925px;top:942px;" width="17" height="26" viewBox="0 0 17 26"><path d="M0 0 L16 13 L0 26 Z" fill="#4d4a47"/></svg>
<div class="t" style="left:965px;top:939px;font-size:35px;line-height:35px;color:#1a1a1a;font-weight:500;">公共函数</div>
<svg style="left:925px;top:1017px;" width="17" height="26" viewBox="0 0 17 26"><path d="M0 0 L16 13 L0 26 Z" fill="#4d4a47"/></svg>
<div class="t" style="left:965px;top:1014px;font-size:35px;line-height:35px;color:#1a1a1a;font-weight:500;">高级函数</div>
<div class="a" style="left:1052.5px;top:1279.5px;width:21px;height:21px;background:#fb9a30;border-radius:50%"></div>
<div class="t" style="left:1091px;top:1258px;font-size:49px;line-height:49px;color:#fb9a30;font-weight:900;font-family:'Liberation Serif',serif">函数/变量选择区</div>
<div class="a" style="left:1504px;top:416px;width:1444px;height:288px;border:4px solid #2cbf47;border-radius:15px;background:#f0faf2;overflow:hidden"></div>
<div class="a" style="left:1508px;top:420px;width:1436px;height:88px;background:#e8f1ea;border-radius:11px 11px 0 0"></div>
<div class="a" style="left:1508px;top:539px;width:1436px;height:72px;background:#e4f5f3"></div>
<div class="t" style="left:1519px;top:443px;font-size:35px;line-height:35px;color:#1f1f1f;font-weight:500;">出库总额/元</div>
<svg style="left:2686px;top:436px;" width="38" height="40" viewBox="0 0 38 40"><path d="M10 30 L6 30 Q3 30 3 27 L3 5 Q3 2 6 2 L18 2 Q20 2 21 4" fill="none" stroke="#3a3a3a" stroke-width="2.6" stroke-linejoin="round"/><path d="M10 10 Q10 8 12 8 L26 8 L34 16 L34 35 Q34 38 31 38 L13 38 Q10 38 10 35 Z" fill="none" stroke="#3a3a3a" stroke-width="2.6" stroke-linejoin="round"/><path d="M16 23 L22 23 M16 30 L28 30" stroke="#3a3a3a" stroke-width="2.6" stroke-linecap="round"/></svg>
<div class="t" style="left:2743px;top:441px;font-size:35px;line-height:35px;color:#2a2a2a;font-weight:500;">复制公式</div>
<div class="t" style="left:1519px;top:559px;font-size:34px;line-height:34px;color:#c23fcb;font-weight:400;letter-spacing:-1.5px">SUM(</div>
<div class="a" style="left:1614px;top:542px;width:386px;height:65px;background:#e6ecce;border-radius:33px"></div>
<div class="t" style="left:1640px;top:560px;font-size:35px;line-height:35px;color:#e7a91a;font-weight:500;">出库明细.折后总价/元</div>
<div class="t" style="left:2009px;top:559px;font-size:34px;line-height:34px;color:#c23fcb;font-weight:400;">)</div>
<div class="a" style="left:2017.5px;top:775.5px;width:21px;height:21px;background:#2cbf47;border-radius:50%"></div>
<div class="t" style="left:2057px;top:751px;font-size:48px;line-height:48px;color:#2cbf47;font-weight:900;font-family:'Liberation Serif',serif">公式编辑区</div>
<div class="a" style="left:1947.5px;top:1318.5px;width:21px;height:21px;background:#0b62f5;border-radius:50%"></div>
<div class="t" style="left:1987px;top:1297px;font-size:48px;line-height:48px;color:#0b62f5;font-weight:900;font-family:'Liberation Serif',serif">函数说明区</div>
<div class="a" style="left:1504px;top:1392px;width:1444px;height:379px;border:4px solid #0f62fe;border-radius:15px;background:#eef4fd"></div>
<div class="t" style="left:1530px;top:1415px;font-size:35px;line-height:50px;color:#2a2a2a;font-weight:400"><span class="l">SUM</span><br>函数可以获取一组数值的总和<br>用法：<span class="l" style="color:#c07ad3">SUM</span><span class="l">(</span>数值<span class="l">1)</span><br>示例：<span class="l" style="color:#c07ad3">SUM</span><span class="l">(20,30,50)</span>会返回<span class="l">"100",</span>计算数字之和</div>
<svg style="left:0px;top:0px;" width="3840" height="2160" viewBox="0 0 3840 2160"><g fill="none" stroke-width="4" stroke-dasharray="8 8"><path d="M1002 1292 V1098" stroke="#fb9a30"/><path d="M1000 1290 H1054" stroke="#fb9a30"/><path d="M1744 788 V714" stroke="#2cbf47"/><path d="M1742 786 H2020" stroke="#2cbf47"/><path d="M1786 1327 V1381" stroke="#0b62f5"/><path d="M1784 1329 H1952" stroke="#0b62f5"/></g></svg>
<div class="a" style="left:808px;top:1830px;width:2224px;height:0px;border-top:2px dashed #dedede"></div>
<div class="a" style="left:2640px;top:1866px;width:148px;height:79px;border:2px solid #d6d9df;border-radius:10px;background:#fff"></div>
<div class="t" style="left:2680px;top:1890px;font-size:35px;line-height:35px;color:#111;font-weight:500;">取消</div>
<div class="a" style="left:2818px;top:1866px;width:149px;height:79px;background:#1e84e0;border-radius:10px"></div>
<div class="t" style="left:2857px;top:1890px;font-size:35px;line-height:35px;color:#fff;font-weight:700;">确定</div>
</body></html>
